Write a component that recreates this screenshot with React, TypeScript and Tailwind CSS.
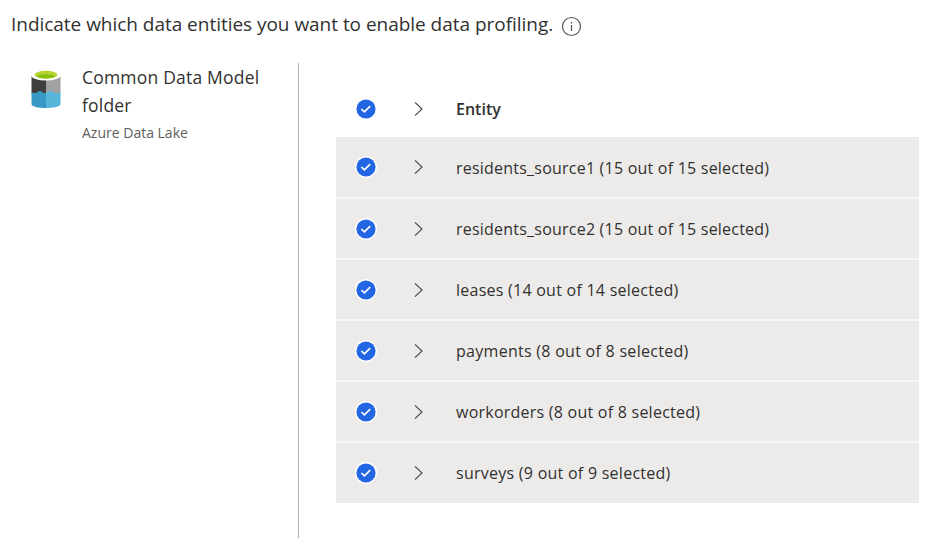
import React from "react";

const rows = [
  { label: "residents_source1 (15 out of 15 selected)", spacing: "tracking-[0.22px]", box: "h-[62px] border-b-2" },
  { label: "residents_source2 (15 out of 15 selected)", spacing: "tracking-[0.22px]", box: "h-[61px] border-b-2" },
  { label: "leases (14 out of 14 selected)", spacing: "tracking-[0.25px]", box: "h-[61px] border-b-2" },
  { label: "payments (8 out of 8 selected)", spacing: "tracking-[0.28px]", box: "h-[61px] border-b-2" },
  { label: "workorders (8 out of 8 selected)", spacing: "tracking-[0.24px]", box: "h-[61px] border-b-2" },
  { label: "surveys (9 out of 9 selected)", spacing: "tracking-[0.26px]", box: "h-[60px] pb-px" },
];

function Check() {
  return (
    <svg className="block h-6 w-6 shrink-0" viewBox="0 0 24 24" fill="none">
      <circle cx="12" cy="12" r="11" fill="#fff" />
      <circle cx="12" cy="12" r="9.6" fill="#2266e3" />
      <path d="M7.4 12l3 2.900 5.800-5.800" stroke="#fff" strokeWidth="1.700" />
    </svg>
  );
}

function Chevron() {
  return (
    <svg className="block h-4 w-3 shrink-0" viewBox="0 0 12 16" fill="none">
      <path d="M2 1.300l7 6.700-7 6.700" stroke="#4a4846" strokeWidth="1.150" />
    </svg>
  );
}

function DataLakeIcon() {
  return (
    <svg className="block h-10 w-8 shrink-0" viewBox="0 0 32 40">
      <path d="M1.500 5.500H16v18H1.500z" fill="#3e3e3e" />
      <path d="M16 5.500h14.500v18H16z" fill="#a0a1a2" />
      <path d="M1.500 22q3 2.500 6 0 2-2.200 4.500 0 2 2 4 1V38C8 38 1.500 36.500 1.500 34z" fill="#3999c6" />
      <path d="M16 23q1.500-.3 3-1.500 1.800-1.500 4 .5 3.500 2.500 7.500 0v12c0 2.500-6.500 4-14.500 4z" fill="#59b4d9" />
      <ellipse cx="16" cy="5.300" rx="15" ry="5.200" fill="#fff" />
      <ellipse cx="16" cy="4.700" rx="11.500" ry="3.900" fill="#b8d432" />
      <ellipse cx="16" cy="6.300" rx="9" ry="2.100" fill="#86be0c" />
    </svg>
  );
}

export default function App() {
  return (
    <div className="flex h-[538px] w-[937px] flex-col overflow-hidden bg-white font-['Open_Sans',sans-serif] text-[#323130]">
      <header className="flex h-[63px] items-start pl-[11px]">
        <h1 className="mt-[10px] whitespace-nowrap text-[19px] leading-7 tracking-[-0.03px]">
          Indicate which data entities you want to enable data profiling.
        </h1>
        <svg className="ml-2 mt-4 block h-[21px] w-[21px] shrink-0" viewBox="0 0 21 21" fill="none">
          <circle cx="10.500" cy="10.500" r="9" stroke="#55534f" strokeWidth="1.200" />
          <path d="M10.500 9v6M10.500 6v1.400" stroke="#55534f" strokeWidth="1.200" />
        </svg>
      </header>
      <main className="flex flex-1">
        <aside className="flex w-[299px] border-r border-[#b3b0ad] pl-[30px] pt-[7px]">
          <DataLakeIcon />
          <div className="ml-5 -mt-[7px]">
            <div className="whitespace-nowrap text-[17.5px] leading-7 tracking-[0.2px]">
              <span>Common Data Model</span>
              <br />
              <span>folder</span>
            </div>
            <div className="whitespace-nowrap text-[14px] leading-7 text-[#605e5c]">
              <span>Azure Data Lake</span>
            </div>
          </div>
        </aside>
        <section className="ml-[37px] w-[583px] pt-[17px]">
          <div className="flex h-[57px] items-center pl-[18px] text-[16px] font-semibold">
            <Check />
            <div className="ml-[35px]"><Chevron /></div>
            <span className="ml-[31px] pt-px">Entity</span>
          </div>
          {rows.map((row) => (
            <div
              key={row.label}
              className={`flex items-center border-[#f8f7f6] bg-[#edebe9] pl-[18px] text-[16px] ${row.box}`}
            >
              <Check />
              <div className="ml-[35px]"><Chevron /></div>
              <span className={`ml-[31px] whitespace-nowrap pt-px ${row.spacing}`}>{row.label}</span>
            </div>
          ))}
        </section>
      </main>
    </div>
  );
}
